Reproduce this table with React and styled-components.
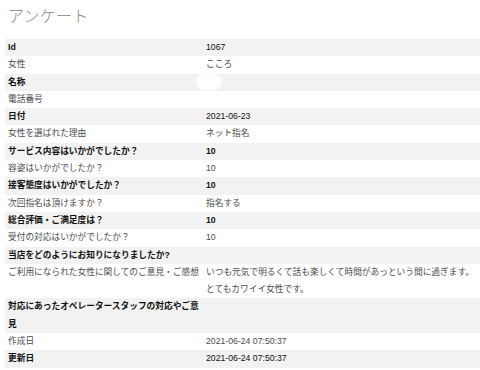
import React from 'react';
import styled, { createGlobalStyle } from 'styled-components';

const GlobalStyle = createGlobalStyle`
  html, body {
    margin: 0;
    padding: 0;
    background: #fff;
  }
  body {
    font-family: "Liberation Sans", "Noto Sans CJK JP", sans-serif;
  }
`;

const Page = styled.div`
  width: 480px;
  height: 370px;
  overflow: hidden;
  padding-left: 5px;
  box-sizing: border-box;
`;

const Title = styled.h1`
  margin: 8px 0 13px 3px;
  font-size: 16px;
  line-height: 18px;
  font-weight: 300;
  color: #858585;
  letter-spacing: 0.2px;
`;

const Table = styled.div`
  display: flex;
  flex-direction: column;
  font-size: 8.7px;
  line-height: 17.3px;
`;

const Row = styled.div`
  display: grid;
  grid-template-columns: 198px 1fr;
  background: ${(p) => (p.$striped ? '#f2f2f2' : '#fff')};
  color: ${(p) => (p.$striped ? '#111' : '#4a4a4a')};
`;

const Label = styled.div`
  padding: 0 0 0 3px;
  font-weight: ${(p) => (p.$bold ? 700 : 400)};
`;

const Value = styled.div`
  padding: 0 3px 0 3px;
  font-weight: ${(p) => (p.$bold ? 700 : 400)};
`;

const Masked = styled.span`
  display: inline-block;
  vertical-align: middle;
  width: 24px;
  height: 14px;
  margin-left: -9px;
  border-radius: 7px;
  background: #fff;
  box-shadow: 0 0 2px 1px rgba(255, 255, 255, 0.9);
`;

const rows = [
  { label: 'Id', value: '1067' },
  { label: '女性', value: 'こころ' },
  { label: '名称', value: <Masked /> },
  { label: '電話番号', value: '' },
  { label: '日付', value: '2021-06-23' },
  { label: '女性を選ばれた理由', value: 'ネット指名' },
  { label: 'サービス内容はいかがでしたか？', value: '10', bold: true },
  { label: '容姿はいかがでしたか？', value: '10' },
  { label: '接客態度はいかがでしたか？', value: '10', bold: true },
  { label: '次回指名は頂けますか？', value: '指名する' },
  { label: '総合評価・ご満足度は？', value: '10', bold: true },
  { label: '受付の対応はいかがでしたか？', value: '10' },
  { label: '当店をどのようにお知りになりましたか?', value: '' },
  {
    label: 'ご利用になられた女性に関してのご意見・ご感想',
    value: 'いつも元気で明るくて話も楽しくて時間があっという間に過ぎます。とてもカワイイ女性です。',
  },
  { label: '対応にあったオペレータースタッフの対応やご意見', value: '' },
  { label: '作成日', value: '2021-06-24 07:50:37' },
  { label: '更新日', value: '2021-06-24 07:50:37' },
];

export default function App() {
  return (
    <Page>
      <GlobalStyle />
      <Title>アンケート</Title>
      <Table>
        {rows.map((r, i) => {
          const striped = i % 2 === 0;
          return (
            <Row key={r.label} $striped={striped}>
              <Label $bold={striped}>{r.label}</Label>
              <Value $bold={r.bold}>{r.value}</Value>
            </Row>
          );
        })}
      </Table>
    </Page>
  );
}
